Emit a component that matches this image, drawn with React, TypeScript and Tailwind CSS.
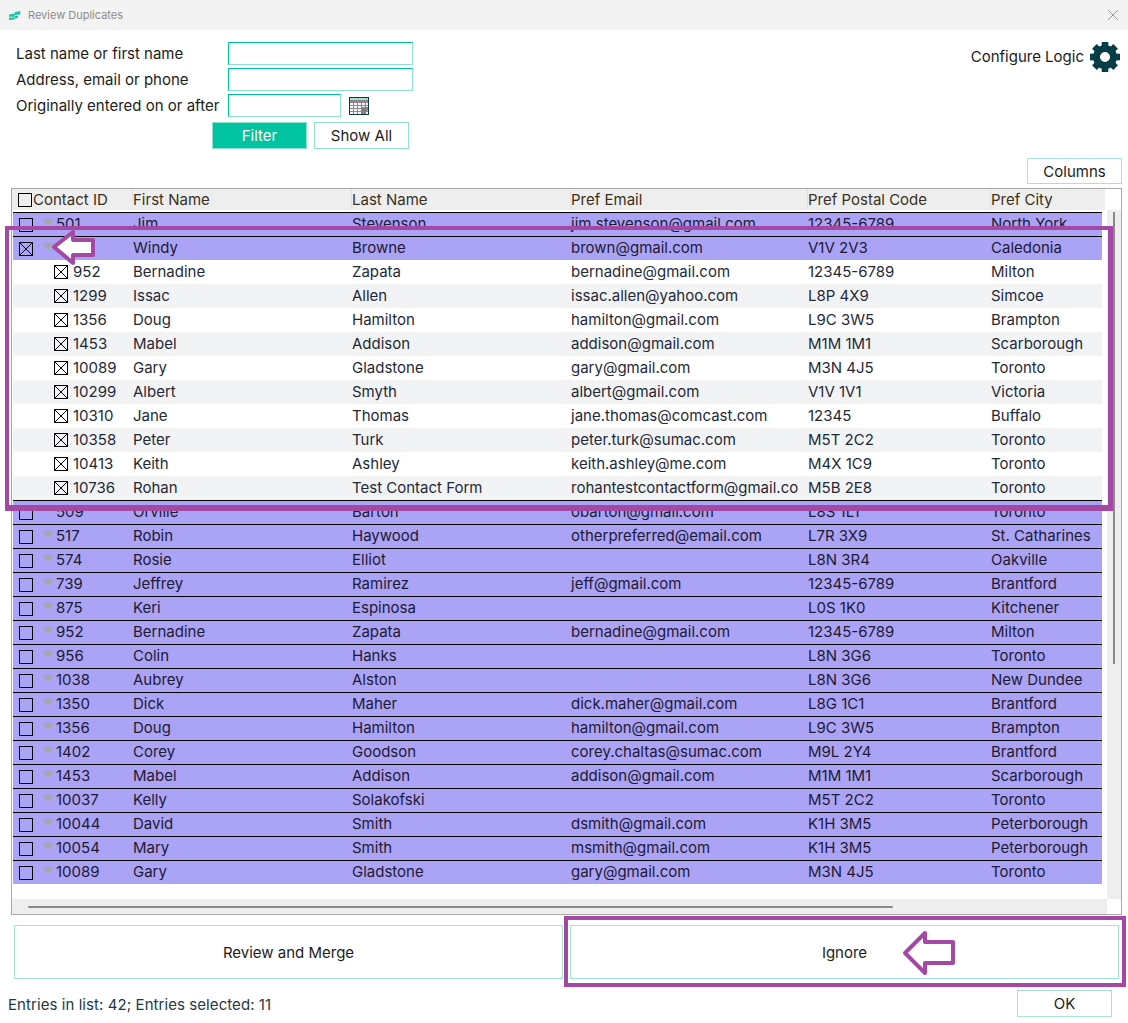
import React from 'react';

const font = "font-['Inter','Liberation_Sans',sans-serif]";

type Row = [string, string, string, string, string, string];

const PARENTS_TOP: Row[] = [
  ['501', 'Jim', 'Stevenson', 'jim.stevenson@gmail.com', '12345-6789', 'North York'],
  ['', 'Windy', 'Browne', 'brown@gmail.com', 'V1V 2V3', 'Caledonia'],
];

const CHILDREN: Row[] = [
  ['952', 'Bernadine', 'Zapata', 'bernadine@gmail.com', '12345-6789', 'Milton'],
  ['1299', 'Issac', 'Allen', 'issac.allen@yahoo.com', 'L8P 4X9', 'Simcoe'],
  ['1356', 'Doug', 'Hamilton', 'hamilton@gmail.com', 'L9C 3W5', 'Brampton'],
  ['1453', 'Mabel', 'Addison', 'addison@gmail.com', 'M1M 1M1', 'Scarborough'],
  ['10089', 'Gary', 'Gladstone', 'gary@gmail.com', 'M3N 4J5', 'Toronto'],
  ['10299', 'Albert', 'Smyth', 'albert@gmail.com', 'V1V 1V1', 'Victoria'],
  ['10310', 'Jane', 'Thomas', 'jane.thomas@comcast.com', '12345', 'Buffalo'],
  ['10358', 'Peter', 'Turk', 'peter.turk@sumac.com', 'M5T 2C2', 'Toronto'],
  ['10413', 'Keith', 'Ashley', 'keith.ashley@me.com', 'M4X 1C9', 'Toronto'],
  ['10736', 'Rohan', 'Test Contact Form', 'rohantestcontactform@gmail.co', 'M5B 2E8', 'Toronto'],
];

const PARENTS: Row[] = [
  ['509', 'Orville', 'Barton', 'obarton@gmail.com', 'L8S 1L1', 'Toronto'],
  ['517', 'Robin', 'Haywood', 'otherpreferred@email.com', 'L7R 3X9', 'St. Catharines'],
  ['574', 'Rosie', 'Elliot', '', 'L8N 3R4', 'Oakville'],
  ['739', 'Jeffrey', 'Ramirez', 'jeff@gmail.com', '12345-6789', 'Brantford'],
  ['875', 'Keri', 'Espinosa', '', 'L0S 1K0', 'Kitchener'],
  ['952', 'Bernadine', 'Zapata', 'bernadine@gmail.com', '12345-6789', 'Milton'],
  ['956', 'Colin', 'Hanks', '', 'L8N 3G6', 'Toronto'],
  ['1038', 'Aubrey', 'Alston', '', 'L8N 3G6', 'New Dundee'],
  ['1350', 'Dick', 'Maher', 'dick.maher@gmail.com', 'L8G 1C1', 'Brantford'],
  ['1356', 'Doug', 'Hamilton', 'hamilton@gmail.com', 'L9C 3W5', 'Brampton'],
  ['1402', 'Corey', 'Goodson', 'corey.chaltas@sumac.com', 'M9L 2Y4', 'Brantford'],
  ['1453', 'Mabel', 'Addison', 'addison@gmail.com', 'M1M 1M1', 'Scarborough'],
  ['10037', 'Kelly', 'Solakofski', '', 'M5T 2C2', 'Toronto'],
  ['10044', 'David', 'Smith', 'dsmith@gmail.com', 'K1H 3M5', 'Peterborough'],
  ['10054', 'Mary', 'Smith', 'msmith@gmail.com', 'K1H 3M5', 'Peterborough'],
  ['10089', 'Gary', 'Gladstone', 'gary@gmail.com', 'M3N 4J5', 'Toronto'],
];

const CheckBox = ({ checked = false }: { checked?: boolean }) => (
  <svg width="14" height="14" viewBox="0 0 14 14" className="shrink-0">
    <rect x="0.5" y="0.5" width="13" height="13" fill="none" stroke="#000" />
    {checked && <path d="M1 1L13 13M13 1L1 13" stroke="#000" strokeWidth="1" />}
  </svg>
);

const Triangle = () => (
  <svg width="12" height="7" viewBox="0 0 12 7" className="shrink-0 -translate-y-[2px]">
    <path d="M0 0H12L6 7Z" fill="#a6a6a6" />
  </svg>
);

const Arrow = ({ className, width, height, d }: { className: string; width: number; height: number; d: string }) => (
  <svg width={width} height={height} viewBox={`0 0 ${width} ${height}`} className={className}>
    <path d={d} fill="#fff" stroke="#a349a4" strokeWidth="4" strokeLinejoin="round" />
  </svg>
);

const GEAR_TEETH = [0, 45, 90, 135, 180, 225, 270, 315];

const Gear = () => (
  <svg width="30" height="30" viewBox="0 0 30 30">
    <circle cx="15" cy="15" r="8.5" fill="none" stroke="#063d47" strokeWidth="7" />
    {GEAR_TEETH.map((deg) => (
      <rect key={deg} x="11.7" y="0" width="6.6" height="6" fill="#063d47" transform={`rotate(${deg} 15 15)`} />
    ))}
  </svg>
);

const Cells = ({ row }: { row: Row }) => (
  <>
    {row.slice(1).map((value, i) => (
      <div key={i} className="whitespace-nowrap">
        {value}
      </div>
    ))}
  </>
);

const ParentRow = ({ row, checked }: { row: Row; checked?: boolean }) => (
  <div className="grid h-6 grid-cols-[120px_219px_219px_237px_183px_111px] items-center border-t border-black bg-[#aba3f5] text-[#1d1a33]">
    <div className="flex items-center pl-[6px]">
      <CheckBox checked={checked} />
      <div className="ml-[9px]">
        <Triangle />
      </div>
      <span className="ml-[2px]">{row[0]}</span>
    </div>
    <Cells row={row} />
  </div>
);

const ChildRow = ({ row, shaded }: { row: Row; shaded: boolean }) => (
  <div
    className={`grid h-6 grid-cols-[120px_219px_219px_237px_183px_111px] items-center text-[#1f2937] ${
      shaded ? 'bg-[#f2f3f5]' : 'bg-white'
    }`}
  >
    <div className="flex items-center gap-[5px] pl-[41px]">
      <CheckBox checked />
      <span>{row[0]}</span>
    </div>
    <Cells row={row} />
  </div>
);

const Field = ({ label, wide = true, calendar = false }: { label: string; wide?: boolean; calendar?: boolean }) => (
  <div className="flex h-[23px] items-center">
    <label className="w-[212px] pt-[2px] text-[#1c1c1c]">{label}</label>
    <div
      className={`h-[23px] border border-[#8fe3cd] border-t-[#00c3a0] border-l-[#00c3a0] bg-white ${
        wide ? 'w-[185px]' : 'w-[113px]'
      }`}
    />
    {calendar && (
      <svg width="20" height="18" viewBox="0 0 20 18" className="ml-[8px]">
        <rect x="0" y="0" width="20" height="18" fill="#0e3a44" />
        <rect x="1" y="1" width="18" height="16" fill="#f4f4f4" />
        <rect x="1" y="1" width="18" height="2" fill="#a8e0cc" />
        <rect x="1" y="3" width="18" height="3" fill="#8a8590" />
        <path d="M1 8.5H19M1 11.5H19M1 14.5H19M4.5 6V17M8.5 6V17M12.5 6V17M16.5 6V17" stroke="#8f8b94" strokeWidth="1" />
        <path d="M12 17L13 10H19V13L16 17Z" fill="#85817f" />
      </svg>
    )}
  </div>
);

const App = () => {
  return (
    <div className={`relative flex h-[1023px] w-[1128px] flex-col overflow-hidden bg-white text-[15px] ${font}`}>
      <div className="flex h-[30px] shrink-0 items-center justify-between bg-[#f3f3f3] pl-[9px] pr-[9px]">
        <div className="flex items-center gap-[7px]">
          <svg width="12" height="9" viewBox="0 0 12 9">
            <path d="M0 3.4L5.6 2.6V5.4L0 5.8ZM5.6 1.2L11.3 0V3.6L5.6 4ZM0 6.6L5.6 6.2V8.4L0 9ZM5.6 5.2L9 4.8V7L5.6 7.4Z" fill="#1cc4a4" />
          </svg>
          <span className="text-[11px] text-[#8c8c8c]">Review Duplicates</span>
        </div>
        <svg width="12" height="12" viewBox="0 0 12 12">
          <path d="M1 1L11 11M11 1L1 11" stroke="#9a9a9a" strokeWidth="1" />
        </svg>
      </div>

      <div className="relative h-[158px] shrink-0">
        <div className="flex flex-col gap-[3px] pl-[16px] pt-[12px]">
          <Field label="Last name or first name" />
          <Field label="Address, email or phone" />
          <Field label="Originally entered on or after" wide={false} calendar />
          <div className="mt-[2px] flex gap-[7px] pl-[196px]">
            <button className="h-[27px] w-[95px] border border-[#8fe3cd] bg-[#00c3a0] pt-[2px] text-white">Filter</button>
            <button className="h-[27px] w-[95px] border border-[#8fe3cd] bg-white pt-[2px] text-[#1c1c1c]">Show All</button>
          </div>
        </div>

        <div className="absolute right-[8px] top-[12px] flex items-center gap-[6px]">
          <span className="text-[#1c1c1c]">Configure Logic</span>
          <Gear />
        </div>

        <button className="absolute right-[6px] top-[128px] h-[26px] w-[95px] border border-[#a5e3d2] bg-white pt-[2px] text-[#1c1c1c]">
          Columns
        </button>
      </div>

      <div className="ml-[11px] flex h-[727px] w-[1111px] shrink-0 flex-col border border-[#a9a9a9] bg-white">
        <div className="grid h-[21px] w-[1093px] shrink-0 grid-cols-[120px_219px_219px_237px_183px_115px] items-center">
          <div className="flex h-full items-center bg-[#eeeeee] pl-[6px]">
            <CheckBox />
            <span className="ml-px text-[#3a3020]">Contact ID</span>
          </div>
          {['First Name', 'Last Name', 'Pref Email', 'Pref Postal Code', 'Pref City'].map((title) => (
            <div key={title} className="flex h-full items-center border-l border-[#e2e2e2] bg-[#eeeeee] text-[#3a3020]">
              {title}
            </div>
          ))}
        </div>

        <div className="flex min-h-0 flex-1">
          <div className="flex w-[1095px] shrink-0 flex-col">
            <div className="h-[2px] shrink-0 bg-white" />
            <div className="w-[1090px] pl-px">
              {PARENTS_TOP.map((row, i) => (
                <ParentRow key={row[1]} row={row} checked={i === 1} />
              ))}
              {CHILDREN.map((row, i) => (
                <ChildRow key={row[0]} row={row} shaded={i % 2 === 1} />
              ))}
              {PARENTS.map((row) => (
                <ParentRow key={row[0]} row={row} />
              ))}
            </div>
          </div>
          <div className="flex w-[14px] shrink-0 justify-center bg-[#eeeeee] pt-[2px]">
            <div className="h-[452px] w-[2px] bg-[#8a8a8a]" />
          </div>
        </div>

        <div className="flex h-[15px] w-[1095px] shrink-0 items-center bg-[#eeeeee] pl-[16px]">
          <div className="h-[2px] w-[865px] rounded-full bg-[#8a8a8a]" />
        </div>
      </div>

      <div className="ml-[14px] mr-[9px] mt-[10px] flex h-[54px] shrink-0 gap-[7px] text-[#1c1c1c]">
        <button className="h-full flex-1 border border-[#a5e3d2] bg-white pt-[2px]">Review and Merge</button>
        <button className="h-full flex-1 border border-[#a5e3d2] bg-white pt-[2px]">Ignore</button>
      </div>

      <div className="flex flex-1 items-start justify-between pl-[8px] pr-[16px] pt-[11px]">
        <span className="pt-[4px] tracking-[0.07px] text-[#1f3a44]">Entries in list: 42; Entries selected: 11</span>
        <button className="h-[27px] w-[95px] border border-[#a5e3d2] bg-white pt-[1px] text-[#1c1c1c]">OK</button>
      </div>

      {/* annotations drawn on top of the screenshot */}
      <div className="pointer-events-none absolute left-[5px] top-[226px] h-[285px] w-[1108px] border-[4px] border-b-[6px] border-r-[5px] border-[#a349a4]" />
      <div className="pointer-events-none absolute left-[564px] top-[916px] h-[71px] w-[562px] border-[4px] border-[#a349a4]" />
      <Arrow
        className="pointer-events-none absolute left-[50px] top-[228px]"
        width={46}
        height={40}
        d="M4 19L23 4V12H43V27H23V35Z"
      />
      <Arrow
        className="pointer-events-none absolute left-[902px] top-[930px]"
        width={54}
        height={46}
        d="M3 23L23 3V12H51V33H23V43Z"
      />
    </div>
  );
};

export default App;
